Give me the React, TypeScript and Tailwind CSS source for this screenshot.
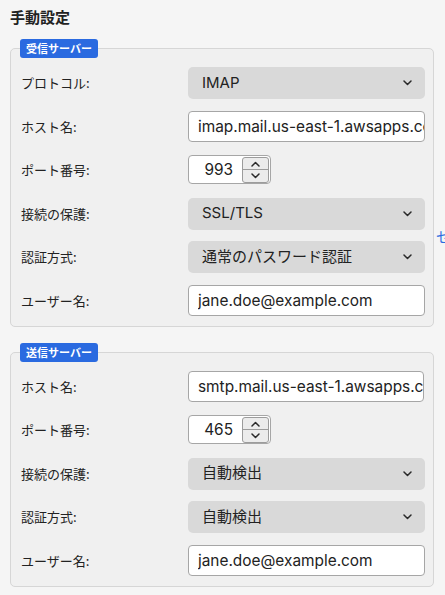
import React from "react";

const jp = "font-['Noto_Sans_CJK_JP',sans-serif]";
const latin = "font-['Inter','Noto_Sans_CJK_JP',sans-serif]";

function Chevron({ up = false, className = "" }: { up?: boolean; className?: string }) {
  return (
    <svg width="9" height="6" viewBox="0 0 9 6" className={className} fill="none">
      <path
        d={up ? "M1 5 L4.5 1.5 L8 5" : "M1 1 L4.5 4.5 L8 1"}
        stroke="#2a2a2a"
        strokeWidth="1.5"
        strokeLinecap="round"
        strokeLinejoin="round"
      />
    </svg>
  );
}

function Select({ value }: { value: string }) {
  return (
    <div className="flex h-[32px] w-[237px] items-center justify-between rounded-[5px] bg-[#d9d9d9] pl-[14px] pr-[13px]">
      <span className={`${latin} text-[15px] text-[#222]`}>{value}</span>
      <Chevron />
    </div>
  );
}

function TextInput({ value, w = "w-[237px]" }: { value: string; w?: string }) {
  return (
    <input
      readOnly
      defaultValue={value}
      className={`${latin} h-[31px] ${w} rounded-[4px] border border-[#a6a6a6] bg-white pl-[9px] text-[15.4px] text-[#222] outline-none`}
    />
  );
}

function PortInput({ value }: { value: string }) {
  return (
    <div className="flex h-[29px] w-[83px] items-center rounded-[4px] border border-[#a6a6a6] bg-white pr-[1px]">
      <span className={`${latin} flex-1 pr-[9px] text-right text-[15.4px] text-[#222]`}>{value}</span>
      <div className="flex h-[26px] w-[27px] flex-col rounded-[3px] border border-[#9c9c9c] bg-[#ececec]">
        <div className="flex flex-1 items-center justify-center border-b border-[#9c9c9c]">
          <Chevron up />
        </div>
        <div className="flex flex-1 items-center justify-center">
          <Chevron />
        </div>
      </div>
    </div>
  );
}

function Row({ label, children }: { label: string; children: React.ReactNode }) {
  return (
    <div className="flex h-[43.6px] items-center">
      <span className={`${jp} w-[167px] shrink-0 text-[13px] text-[#222]`}>{label}</span>
      {children}
    </div>
  );
}

function Section({ title, children }: { title: string; children: React.ReactNode }) {
  return (
    <fieldset className="rounded-[5px] border border-[#d6d6d6] bg-[#f0f0f0] pb-[3px] pl-[10px] pr-[8px]">
      <legend
        className={`${jp} ml-[-1px] h-[19px] rounded-[3px] bg-[#2a6ae0] px-[6px] text-[11px] font-bold leading-[19px] text-white`}
      >
        {title}
      </legend>
      <div className="pt-[3px]">{children}</div>
    </fieldset>
  );
}

export default function App() {
  return (
    <div className="h-[595px] w-[445px] overflow-hidden bg-[#f5f5f5] pl-[10px] pt-[7px]">
      <h2 className={`${jp} text-[15px] font-bold leading-[20px] text-[#222]`}>手動設定</h2>
      <div className="mt-[12px] flex items-start gap-[2px]">
        <div className="flex w-[424px] shrink-0 flex-col gap-4">
          <Section title="受信サーバー">
            <Row label="プロトコル:">
              <Select value="IMAP" />
            </Row>
            <Row label="ホスト名:">
              <TextInput value="imap.mail.us-east-1.awsapps.com" />
            </Row>
            <Row label="ポート番号:">
              <PortInput value="993" />
            </Row>
            <Row label="接続の保護:">
              <Select value="SSL/TLS" />
            </Row>
            <Row label="認証方式:">
              <div className={jp}>
                <Select value="通常のパスワード認証" />
              </div>
            </Row>
            <Row label="ユーザー名:">
              <TextInput value="jane.doe@example.com" />
            </Row>
          </Section>
          <Section title="送信サーバー">
            <Row label="ホスト名:">
              <TextInput value="smtp.mail.us-east-1.awsapps.com" w="w-[236px]" />
            </Row>
            <Row label="ポート番号:">
              <PortInput value="465" />
            </Row>
            <Row label="接続の保護:">
              <Select value="自動検出" />
            </Row>
            <Row label="認証方式:">
              <Select value="自動検出" />
            </Row>
            <Row label="ユーザー名:">
              <TextInput value="jane.doe@example.com" />
            </Row>
          </Section>
        </div>
        <span className={`${jp} mt-[187px] whitespace-nowrap text-[14px] leading-[20px] text-[#2a6ae0]`}>
          セットアップを続ける
        </span>
      </div>
    </div>
  );
}
